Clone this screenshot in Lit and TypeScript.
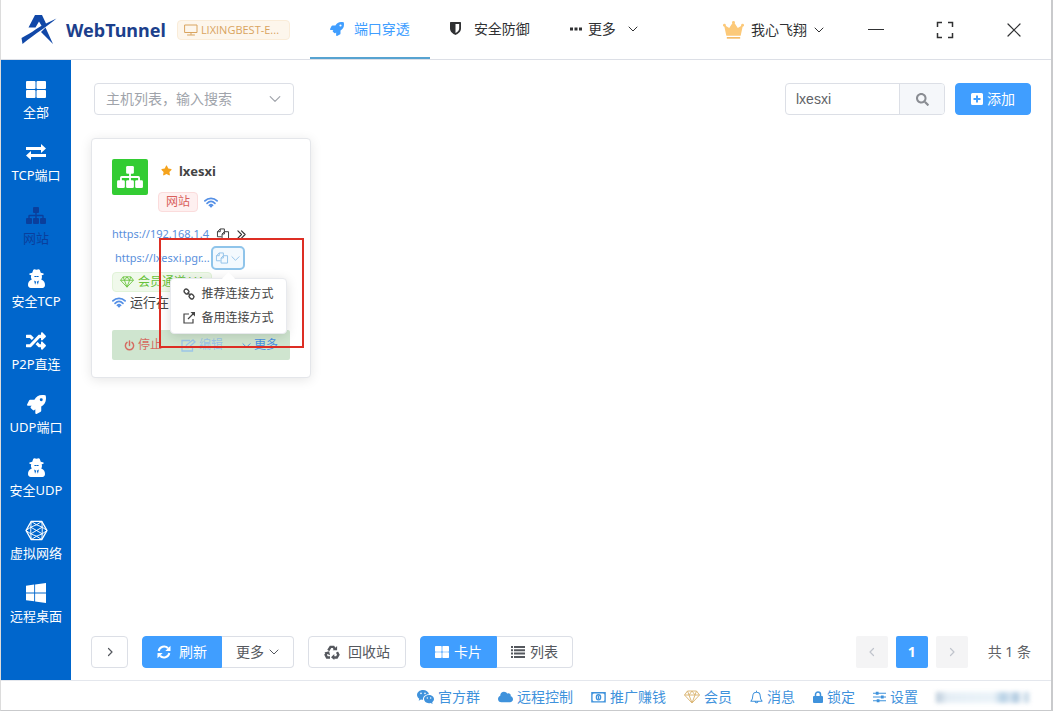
import { LitElement, html, css, svg, SVGTemplateResult } from "lit";
import { customElement, property, state } from "lit/decorators.js";
import { classMap } from "lit/directives/class-map.js";

interface Glyph {
  box: string;
  body: SVGTemplateResult;
}

const ROCKET =
  "M505.12 19.09c-1.19-5.53-6.66-11-12.2-12.18C460.7 0 435.5 0 410.4 0 307.2 0 245.3 55.2 199 128H94.8c-16.3 0-35.5 11.9-42.8 26.5L2.5 253.3A28.4 28.4 0 0 0 0 264a24 24 0 0 0 24 24h103.8l-22.5 22.5c-11.3 11.3-13 32.2 0 45.2l50.9 50.9c11.2 11.2 32.2 13.2 45.3 0l22.5-22.5V488a24 24 0 0 0 24 24 28.6 28.6 0 0 0 10.7-2.5l98.7-49.4c14.6-7.3 26.5-26.5 26.5-42.9V312.8c72.6-46.3 128-108.4 128-211.1.1-25.2.1-50.4-6.8-82.6zM384 168a40 40 0 1 1 40-40 40 40 0 0 1-40 40z";
const SHUFFLE =
  "M504.971 359.029c9.373 9.373 9.373 24.569 0 33.941l-80 79.984c-15.01 15.01-40.971 4.49-40.971-16.971V416h-58.785a12.004 12.004 0 0 1-8.773-3.812l-70.556-75.596 53.333-57.143L352 336h32v-39.981c0-21.438 25.943-31.998 40.971-16.971l80 79.981zM12 176h84l52.781 56.551 53.333-57.143-70.556-75.596A11.999 11.999 0 0 0 122.785 96H12c-6.627 0-12 5.373-12 12v56c0 6.627 5.373 12 12 12zm372 0v39.984c0 21.46 25.961 31.98 40.971 16.971l80-79.984c9.373-9.373 9.373-24.569 0-33.941l-80-79.981C409.943 24.021 384 34.582 384 56.019V96h-58.785a12.004 12.004 0 0 0-8.773 3.812L96 336H12c-6.627 0-12 5.373-12 12v56c0 6.627 5.373 12 12 12h110.785c3.326 0 6.503-1.381 8.773-3.812L352 176h32z";
const SEARCH =
  "M505 442.7L405.3 343c-4.5-4.5-10.6-7-17-7H372c27.6-35.3 44-79.7 44-128C416 93.1 322.9 0 208 0S0 93.1 0 208s93.1 208 208 208c48.3 0 92.7-16.4 128-44v16.3c0 6.4 2.5 12.5 7 17l99.7 99.7c9.4 9.4 24.6 9.4 33.9 0l28.3-28.3c9.4-9.4 9.4-24.6.1-34zM208 336c-70.7 0-128-57.2-128-128 0-70.7 57.2-128 128-128 70.7 0 128 57.2 128 128 0 70.7-57.2 128-128 128z";
const STAR =
  "M259.3 17.8L194 150.2 47.9 171.5c-26.2 3.8-36.7 36.1-17.7 54.6l105.7 103-25 145.5c-4.5 26.3 23.2 46 46.4 33.7L288 439.6l130.7 68.7c23.2 12.2 50.9-7.4 46.4-33.7l-25-145.5 105.7-103c19-18.5 8.5-50.8-17.7-54.6L382 150.2 316.7 17.8c-11.7-23.6-45.6-23.9-57.4 0z";
const CLOUD =
  "M537.6 226.6c4.1-10.7 6.4-22.4 6.4-34.6 0-53-43-96-96-96-19.7 0-38.1 6-53.3 16.2C367 64.2 315.3 32 256 32c-88.4 0-160 71.6-160 160 0 2.7.1 5.4.2 8.1C40.2 219.8 0 273.2 0 336c0 79.5 64.5 144 144 144h368c70.7 0 128-57.3 128-128 0-61.9-44-113.6-102.4-125.4z";
const WINDOWS =
  "M0 93.7l183.6-25.3v177.4H0V93.7zm0 324.6l183.6 25.3V268.4H0v149.9zm203.8 28L448 480V268.4H203.8v177.9zm0-380.6v180.1H448V32L203.8 65.7z";

const solid = (d: string) => svg`<path d=${d} fill="currentColor" />`;
const line = (d: string, w = 1) =>
  svg`<path d=${d} fill="none" stroke="currentColor" stroke-width=${w} stroke-linecap="round" stroke-linejoin="round" />`;

const GLYPHS: Record<string, Glyph> = {
  logo: {
    box: "0 0 36 30",
    body: svg`<path fill="#1148a8" d="M14 0h7l4 8.500L35.500 3.500C27 11 15 18 1.500 29L.5 23C6 20 10.500 17.500 14.500 14.500L20.500 10.800 18 6.500 14.500 12.500H7.500zM24.500 12.500 32 29 20 17z" />`,
  },
  monitor: { box: "0 0 14 12", body: line("M1 1h12v7.500H1zM7 8.500v2M3.500 11h7") },
  rocket: { box: "0 0 512 512", body: solid(ROCKET) },
  shield: {
    box: "0 0 12 14",
    body: svg`<path fill="currentColor" fill-rule="evenodd" d="M0 .7C0 .3.300 0 .700 0h10.600c.4 0 .7.300.700.700V7c0 4-4 6.300-6 7-2-.7-6-3-6-7zM6 2v10c2-1 4-2.500 4-5V2z" />`,
  },
  dots: { box: "0 0 12 4", body: solid("M0 .5h3v3H0zM4.500.5h3v3h-3zM9 .5h3v3H9z") },
  down: { box: "0 0 10 10", body: line("M1 3l4 4 4-4") },
  right: { box: "0 0 10 10", body: line("M3.500 1.500 7 5 3.500 8.500", 1.2) },
  left: { box: "0 0 10 10", body: line("M6.500 1.500 3 5l3.500 3.500", 1.2) },
  crown: {
    box: "0 0 22 20",
    body: svg`<path fill="#fcc979" d="M1 4.500 6.500 8 11 1l4.500 7L21 4.500 18.500 16h-15z" /><circle cx="1.500" cy="5" r="1.500" fill="#fcc979" /><circle cx="20.500" cy="5" r="1.500" fill="#fcc979" /><circle cx="11" cy="2" r="1.500" fill="#fcc979" /><path fill="#f3b04d" d="M4 17.500h14V19H4z" />`,
  },
  minus: { box: "0 0 16 16", body: svg`<path d="M0 7.500h16" stroke="currentColor" />` },
  expand: {
    box: "0 0 18 18",
    body: svg`<path d="M6 1.500H1.500V6M12 1.500h4.500V6M1.500 12v4.500H6M16.500 12v4.500H12" fill="none" stroke="currentColor" stroke-width="1.500" />`,
  },
  close: { box: "0 0 14 14", body: line("M1 1l12 12M13 1 1 13", 1.2) },
  grid: {
    box: "0 0 20 17",
    body: svg`<g fill="currentColor"><rect width="9.500" height="8" rx="1" /><rect x="10.500" width="9.500" height="8" rx="1" /><rect y="9" width="9.500" height="8" rx="1" /><rect x="10.500" y="9" width="9.500" height="8" rx="1" /></g>`,
  },
  swap: { box: "0 0 20 16", body: solid("M0 3h15V0l5 4.500L15 9V6H0zM20 10H5V7l-5 4.500L5 16v-3h15z") },
  sitemap: {
    box: "0 0 20 17",
    body: svg`<g fill="currentColor"><rect x="7" width="6" height="6" rx="1" /><rect y="11" width="6" height="6" rx="1" /><rect x="7" y="11" width="6" height="6" rx="1" /><rect x="14" y="11" width="6" height="6" rx="1" /></g><path d="M10 5v7M3 12V9q0-.5.5-.5h13q.5 0 .5.500v3" fill="none" stroke="currentColor" stroke-width="1.400" />`,
  },
  agent: {
    box: "0 0 18 20",
    body: svg`<path fill="currentColor" fill-rule="evenodd" d="M4.500 3.800 5.500 1C6 0 7.200 0 9 .8 10.800 0 12 0 12.500 1l1 2.800 3 .9v1.300l-2 .5c.6 2 .2 3.500-.5 4.500 3 1 4 3 4 6 0 2-1 3-2.700 3H3C1.300 20 0 19 0 17c0-3 1-5 4-6-.8-1.200-1.200-2.500-.6-4.500L1.500 6V4.700zM6.300 7.300C7 8.700 8 8.600 9 7.800c1 .8 2 .9 2.700-.5zM6.500 12l1 4.500L8.700 13.500zM11.500 12l-2.200 1.500 1.200 3z" />`,
  },
  shuffle: { box: "0 0 512 512", body: solid(SHUFFLE) },
  mesh: {
    box: "0 0 24 22",
    body: svg`<g fill="none" stroke="currentColor" stroke-linejoin="round"><path stroke-width="1.400" d="M6.500 1.500h11L23 11l-5.500 9.500h-11L1 11z" /><path d="M6.500 1.500 12 5l5.500-3.500L18 7.500 23 11l-5 3.500-.5 6L12 17l-5.500 3.500-.5-6L1 11l5-3.500zM12 5 6 7.500v7l6 2.500 6-2.500v-7zM6 7.500l12 7M18 7.500l-12 7" /></g>`,
  },
  windows: { box: "0 32 448 448", body: solid(WINDOWS) },
  search: { box: "0 0 512 512", body: solid(SEARCH) },
  plus: {
    box: "0 0 12 12",
    body: svg`<path fill="currentColor" fill-rule="evenodd" d="M1.500 0h9Q12 0 12 1.500v9q0 1.500-1.500 1.500h-9Q0 12 0 10.500v-9Q0 0 1.500 0zM5 2.500V5H2.500v2H5v2.500h2V7h2.500V5H7V2.500z" />`,
  },
  star: { box: "0 0 576 512", body: solid(STAR) },
  wifi: {
    box: "0 0 16 12",
    body: svg`<g fill="none" stroke="currentColor" stroke-width="2" stroke-linecap="round"><path d="M1 4.200c4-4 10-4 14 0M3.500 6.900c2.700-2.600 6.300-2.600 9 0" /><path d="M6.200 9.300q1.800-1.500 3.600 0" /></g><circle cx="8" cy="10.500" r="1.300" fill="currentColor" />`,
  },
  copy: {
    box: "0 0 13 12",
    body: svg`<g fill="none" stroke="currentColor" stroke-linejoin="round"><path d="M5 9H.5V3.500L3.500.5H8v3" /><path d="M.5 3.500h3v-3" /><path d="M5.500 6l2.500-2.500h4.500v8h-7z" /><path d="M5.500 6H8V3.500" /></g>`,
  },
  dbl: { box: "0 0 10 10", body: line("M1 1l4 4-4 4M5 1l4 4-4 4", 1.3) },
  diamond: {
    box: "0 0 16 14",
    body: svg`<path d="M3.500 1h9L15.500 5 8 13 .5 5zM.5 5h15M3.500 1 5 5l3 8 3-8 1.500-4M5 5l3-4 3 4" fill="none" stroke="currentColor" stroke-linejoin="round" />`,
  },
  link: {
    box: "0 0 12 12",
    body: svg`<g fill="none" stroke="currentColor" stroke-width="1.400"><rect x="1" y="1.500" width="5" height="4" rx="1.800" transform="rotate(45 3.500 3.500)" /><rect x="6" y="6.500" width="5" height="4" rx="1.800" transform="rotate(45 8.500 8.500)" /><path d="M4.500 4.500l3 3" /></g>`,
  },
  share: { box: "0 0 12 12", body: svg`<path d="M6 2H1v9h9V7M5 7l6-6" fill="none" stroke="currentColor" stroke-width="1.200" /><path d="M7.500 0H12v4.500z" fill="currentColor" />` },
  power: { box: "0 0 12 12", body: line("M6 1v5M3.300 2.600a4.500 4.500 0 1 0 5.400 0", 1.6) },
  edit: { box: "0 0 15 13", body: svg`<path d="M9 1.500H1v10.500h10.500V8M5 8.500l.5-2.500L12 .8 14 3 7.500 8.500z" fill="none" stroke="currentColor" stroke-width="1.300" />` },
  refresh: {
    box: "0 0 14 14",
    body: svg`<path d="M1.700 6a5.400 5.400 0 0 1 9.300-2.700M12.300 8a5.400 5.400 0 0 1-9.300 2.700" fill="none" stroke="currentColor" stroke-width="2" /><path d="M13.500.8V6H8.300zM.5 13.200V8h5.200z" fill="currentColor" />`,
  },
  recycle: {
    box: "0 0 16 15",
    body: svg`<path d="M4.300 5.500 6.500 1.900h3l1.500 2.400M13 7.200l1.400 2.500-1.600 2.800H9.500M6 12.500H3L1.600 9.800 3 7.500" fill="none" stroke="currentColor" stroke-width="2.400" /><path d="M8.700 5.300h4.400V1zM10.300 9v6L7 12.300zM.3 7.400l4.800-1.200 1 4z" fill="currentColor" />`,
  },
  list: { box: "0 0 14 12", body: solid("M0 0h2v2H0zM3 0h11v2H3zM0 3.300h2v2H0zM3 3.300h11v2H3zM0 6.600h2v2H0zM3 6.600h11v2H3zM0 10h2v2H0zM3 10h11v2H3z") },
  chat: {
    box: "0 0 17 14",
    body: svg`<path fill="currentColor" fill-rule="evenodd" d="M6 0c3 0 5.500 1.800 6 4.200-3.500 0-6.300 2.200-6 5.600-.7 0-1.400-.1-2-.3L1.700 10.800l.6-2C.9 7.900 0 6.500 0 5 0 2.200 2.700 0 6 0zM4 2.600a.8.8 0 1 0 0 1.600.8.8 0 0 0 0-1.600zm4 0a.8.8 0 1 0 0 1.600.8.8 0 0 0 0-1.600z" /><path fill="currentColor" fill-rule="evenodd" d="M12 5c2.800 0 5 1.800 5 4.100 0 1.300-.7 2.400-1.800 3.200l.4 1.600-1.900-1c-3.700 1-6.700-1-6.700-3.800C7 6.800 9.200 5 12 5zm-1.700 2.300a.7.7 0 1 0 0 1.400.7.7 0 0 0 0-1.400zm3.400 0a.7.7 0 1 0 0 1.400.7.7 0 0 0 0-1.400z" />`,
  },
  cloud: { box: "0 0 640 512", body: solid(CLOUD) },
  money: {
    box: "0 0 16 12",
    body: svg`<g fill="none" stroke="currentColor" stroke-width="1.500"><path d="M.8.800h14.400v10H.8z" /><ellipse cx="8" cy="5.800" rx="2.300" ry="2.800" /></g><path d="M7.400 4.200h1.200v3.400H7.400zM1 1h2L1 3zM15 1h-2l2 2zM1 10.600h2l-2-2zM15 10.600h-2l2-2z" fill="currentColor" />`,
  },
  bell: { box: "0 0 14 15", body: line("M1 12c2-2 2-3 2-5.500C3 4 4.500 2.300 7 2.300S11 4 11 6.500C11 9 11 10 13 12zM7 2.300V1M5.500 12.500q1.500 2.500 3 0", 1.1) },
  lock: {
    box: "0 0 10 12",
    body: svg`<path d="M2.500 6V3.500a2.500 2.500 0 0 1 5 0V6" fill="none" stroke="currentColor" stroke-width="1.500" /><rect y="5" width="10" height="7" rx="1" fill="currentColor" />`,
  },
  sliders: {
    box: "0 0 14 12",
    body: svg`<path d="M0 2h14M0 6h14M0 10h14" stroke="currentColor" stroke-width="1.200" /><path d="M3 .3h3v3.400H3zM8.500 4.300h3v3.400h-3zM4 8.300h3v3.400H4z" fill="currentColor" />`,
  },
};

@customElement("ui-icon")
class UiIcon extends LitElement {
  @property() name = "";
  @property({ type: Number }) w = 14;
  @property({ type: Number }) h = 14;

  static styles = css`
    :host {
      display: inline-flex;
      flex: none;
    }
    svg {
      display: block;
      overflow: visible;
    }
  `;

  render() {
    const g = GLYPHS[this.name];
    return html`<svg width=${this.w} height=${this.h} viewBox=${g.box} aria-hidden="true">${g.body}</svg>`;
  }
}

const icon = (name: string, w: number, h: number) =>
  html`<ui-icon name=${name} w=${w} h=${h}></ui-icon>`;

const base = css`
  * {
    box-sizing: border-box;
  }
  button,
  input,
  select {
    font: inherit;
    color: inherit;
    margin: 0;
    padding: 0;
    border: 0;
    background: none;
    outline: none;
    border-radius: 0;
  }
  button {
    display: inline-flex;
    align-items: center;
    justify-content: center;
    white-space: nowrap;
    cursor: pointer;
  }
  a {
    color: inherit;
    text-decoration: none;
    white-space: nowrap;
  }
`;

@customElement("tunnel-card")
class TunnelCard extends LitElement {
  @state() private menuOpen = true;

  static styles = [
    base,
    css`
      :host {
        display: block;
        position: relative;
        box-sizing: border-box;
        width: 220px;
        padding: 20px 20px 17px;
        background: #fff;
        border: 1px solid #e4e6ea;
        border-radius: 4px;
        box-shadow: 0 2px 12px rgba(0, 0, 0, 0.1);
        font-size: 12px;
        line-height: 20px;
      }
      .head {
        display: flex;
        gap: 10px;
      }
      .avatar {
        display: flex;
        flex: none;
        align-items: center;
        justify-content: center;
        width: 36px;
        height: 36px;
        border-radius: 2px;
        background: #33cc33;
        color: #fff;
      }
      .title {
        display: flex;
        align-items: center;
        gap: 7px;
        height: 23px;
        padding-left: 3px;
        color: #f5a31c;
      }
      .name {
        margin: 0;
        font-size: 13px;
        line-height: 20px;
        color: #444;
      }
      .tags {
        display: flex;
        align-items: center;
        gap: 6px;
        margin-top: 10px;
        color: #5590e6;
      }
      .tag {
        display: flex;
        align-items: center;
        height: 20px;
        padding: 0 7px;
        border: 1px solid #fbdcdc;
        border-radius: 4px;
        background: #fef0f0;
        color: #d9605c;
        line-height: 18px;
      }
      .tag.vip {
        gap: 4px;
        width: 100px;
        margin-top: 2px;
        border-color: #e1f3d8;
        background: #f0f9eb;
        color: #67c23a;
        white-space: nowrap;
      }
      .row {
        display: flex;
        align-items: center;
        height: 24px;
        color: #333;
      }
      .row.first {
        margin-top: 10px;
        gap: 8px;
      }
      .row.second {
        gap: 1px;
        padding-left: 3px;
      }
      .url {
        font-size: 11px;
        color: #5a8fdc;
      }
      .drop {
        position: relative;
        display: flex;
      }
      .toggle {
        gap: 3px;
        width: 34px;
        height: 24px;
        border: 2px solid #8fc4ea;
        border-radius: 5px;
        background: #f3f9fe;
        color: #8fc0e8;
      }
      .menu {
        position: absolute;
        z-index: 2;
        top: 32px;
        right: -42px;
        width: 117px;
        margin: 0;
        padding: 3px 0;
        list-style: none;
        background: #fff;
        border: 1px solid #e8eaee;
        border-radius: 4px;
        box-shadow: 0 2px 12px rgba(0, 0, 0, 0.14);
      }
      .menu::before {
        content: "";
        position: absolute;
        top: -5px;
        left: 53px;
        width: 9px;
        height: 9px;
        background: #fff;
        transform: rotate(45deg);
      }
      .menu li {
        display: flex;
      }
      .option {
        gap: 7px;
        width: 100%;
        height: 24px;
        color: #444;
      }
      .status {
        display: flex;
        align-items: center;
        gap: 4px;
        height: 20px;
        color: #5590e6;
      }
      .state {
        font-size: 13px;
        color: #444;
      }
      .actions {
        display: flex;
        justify-content: space-between;
        align-items: center;
        height: 30px;
        margin-top: 18px;
        padding: 0 12px;
        border-radius: 2px;
        background: #cfe5cf;
      }
      .action {
        gap: 3px;
        color: #4a90e2;
      }
      .action.stop {
        color: #d56a60;
      }
      .action.off {
        color: #9cc5e8;
      }
      .frame {
        position: absolute;
        z-index: 3;
        top: 99px;
        left: 67px;
        width: 145px;
        height: 110px;
        border: 2px solid #dd2e24;
        pointer-events: none;
      }
    `,
  ];

  render() {
    return html`
      <div class="head">
        <span class="avatar">${icon("sitemap", 26, 22)}</span>
        <div>
          <div class="title">${icon("star", 11, 11)}<h2 class="name">lxesxi</h2></div>
          <div class="tags"><span class="tag">网站</span>${icon("wifi", 14, 11)}</div>
        </div>
      </div>
      <div class="row first">
        <a class="url" href="#local">https://192.168.1.4</a>${icon("copy", 12, 12)}${icon("dbl", 9, 9)}
      </div>
      <div class="row second">
        <a class="url" href="#remote">https://lxesxi.pgr...</a>
        <div class="drop">
          <button class="toggle" aria-label="复制连接" @click=${() => (this.menuOpen = !this.menuOpen)}>
            ${icon("copy", 12, 12)}${icon("down", 9, 9)}
          </button>
          ${this.menuOpen
            ? html`<ul class="menu">
                <li><button class="option">${icon("link", 12, 12)}推荐连接方式</button></li>
                <li><button class="option">${icon("share", 12, 12)}备用连接方式</button></li>
              </ul>`
            : null}
        </div>
      </div>
      <div class="tag vip">${icon("diamond", 14, 12)}会员通道 V4</div>
      <div class="status">${icon("wifi", 14, 11)}<span class="state">运行在</span></div>
      <div class="actions">
        <button class="action stop">${icon("power", 11, 11)}停止</button>
        <button class="action off" disabled>${icon("edit", 15, 13)}编辑</button>
        <button class="action">${icon("down", 9, 9)}更多</button>
      </div>
      <div class="frame"></div>
    `;
  }
}

const NAV: [string, string, number, number][] = [
  ["全部", "grid", 20, 17],
  ["TCP端口", "swap", 20, 16],
  ["网站", "sitemap", 20, 17],
  ["安全TCP", "agent", 17, 19],
  ["P2P直连", "shuffle", 20, 20],
  ["UDP端口", "rocket", 19, 19],
  ["安全UDP", "agent", 17, 19],
  ["虚拟网络", "mesh", 23, 21],
  ["远程桌面", "windows", 20, 20],
];

const LINKS: [string, string, number, number][] = [
  ["官方群", "chat", 17, 14],
  ["远程控制", "cloud", 15, 12],
  ["推广赚钱", "money", 15, 11],
  ["会员", "diamond", 16, 14],
  ["消息", "bell", 13, 14],
  ["锁定", "lock", 10, 12],
  ["设置", "sliders", 13, 12],
];

@customElement("app-root")
class AppRoot extends LitElement {
  @state() private nav = 2;

  static styles = [
    base,
    css`
      :host {
        display: grid;
        grid-template-rows: 60px minmax(0, 1fr) 30px;
        box-sizing: border-box;
        height: 100vh;
        border: solid #c9cacc;
        border-width: 0 2px 1px 1px;
        border-left-color: #dcdcdc;
        background: #fff;
        color: #303133;
        font-family: "Noto Sans", "Noto Sans CJK SC", sans-serif;
        font-size: 14px;
        line-height: 20px;
      }
      .top {
        display: flex;
        align-items: center;
        border-bottom: 1px solid #dcdfe6;
        padding: 0 28px 0 20px;
      }
      .brand {
        margin: 0 11px 0 9px;
        font-size: 18px;
        line-height: 28px;
        color: #1c3f8c;
      }
      .host {
        display: flex;
        align-items: center;
        gap: 3px;
        width: 113px;
        height: 20px;
        padding: 0 6px;
        border: 1px solid #faecd8;
        border-radius: 4px;
        background: #fdf6ec;
        color: #d9a45f;
        line-height: 18px;
      }
      .host span {
        font-family: "Open Sans", sans-serif;
        overflow: hidden;
        white-space: nowrap;
        font-size: 11px;
      }
      .tabs {
        display: flex;
        align-self: stretch;
        margin-left: 20px;
      }
      .tab {
        height: 59px;
        padding: 0 20px;
        border-bottom: 2px solid transparent;
      }
      .tab.on {
        color: #409eff;
        border-bottom-color: #57a3d1;
      }
      .tab .lead {
        display: flex;
        width: 24px;
      }
      .tab.more {
        gap: 6px;
      }
      .tab.more .caret {
        margin-left: 6px;
      }
      .caret {
        display: flex;
      }
      .user {
        gap: 7px;
        margin-left: auto;
        margin-right: 43px;
      }
      .win {
        width: 18px;
        height: 30px;
      }
      .wins {
        display: flex;
        gap: 51px;
      }
      .middle {
        display: grid;
        grid-template-columns: 70px minmax(0, 1fr);
      }
      .side {
        display: flex;
        flex-direction: column;
        padding-top: 16px;
        background: #0066cc;
        color: #fff;
      }
      .item {
        flex-direction: column;
        justify-content: flex-start;
        height: 63px;
        font-size: 13px;
        line-height: 20px;
      }
      .item.on {
        color: #0a3f9c;
      }
      .pic {
        display: flex;
        align-items: center;
        justify-content: center;
        height: 26px;
      }
      .main {
        display: flex;
        flex-direction: column;
        padding: 23px 20px 12px;
      }
      .tools {
        display: flex;
        align-items: center;
        padding-left: 3px;
      }
      .pick {
        display: grid;
        align-items: center;
        width: 200px;
        height: 32px;
        border: 1px solid #dcdfe6;
        border-radius: 4px;
        color: #a0a4ab;
      }
      .pick select,
      .pick .caret {
        grid-area: 1 / 1;
      }
      .pick select {
        appearance: none;
        height: 30px;
        padding: 0 11px;
      }
      .pick .caret {
        justify-self: end;
        margin-right: 12px;
        pointer-events: none;
      }
      .find {
        display: flex;
        width: 160px;
        height: 32px;
        margin-left: auto;
        border: 1px solid #dcdfe6;
        border-radius: 4px;
        overflow: hidden;
      }
      .find input {
        flex: 1;
        min-width: 0;
        padding: 0 10px;
        color: #606266;
        font-family: "Liberation Sans", sans-serif;
      }
      .find button {
        width: 45px;
        border-left: 1px solid #dcdfe6;
        background: #f5f7fa;
        color: #8a8d93;
      }
      .btn {
        gap: 8px;
        height: 32px;
        padding: 0 15px;
        border: 1px solid #dcdfe6;
        border-radius: 4px;
        background: #fff;
        color: #55585e;
      }
      .btn.blue {
        border-color: #409eff;
        background: #409eff;
        color: #fff;
      }
      .btn.add {
        gap: 4px;
        margin-left: 10px;
      }
      .cards {
        flex: 1;
        padding-top: 23px;
      }
      .bar {
        display: flex;
        align-items: center;
        gap: 14px;
      }
      .join {
        display: flex;
      }
      .join .btn {
        padding: 0 14px;
      }
      .join .btn:first-child {
        border-radius: 4px 0 0 4px;
      }
      .join .btn:last-child {
        border-left: 0;
        border-radius: 0 4px 4px 0;
      }
      .btn.tight {
        gap: 5px;
      }
      .btn.small {
        width: 37px;
        padding: 0;
      }
      .pages {
        display: flex;
        align-items: center;
        gap: 8px;
        margin-left: auto;
        color: #606266;
      }
      .page {
        width: 32px;
        height: 32px;
        border-radius: 2px;
        background: #f4f4f5;
        color: #c0c4cc;
      }
      .page.on {
        background: #409eff;
        color: #fff;
        font-weight: 700;
      }
      .total {
        margin-left: 12px;
      }
      .foot {
        display: flex;
        align-items: center;
        justify-content: flex-end;
        gap: 18px;
        padding: 3px 22px 0 20px;
        border-top: 1px solid #e4e7ed;
        color: #3f92dc;
      }
      .foot a {
        display: flex;
        align-items: center;
        gap: 4px;
      }
      .gem {
        display: flex;
        color: #dcb878;
      }
      .smudge {
        width: 93px;
        height: 11px;
        background: linear-gradient(
          90deg,
          #a9bdd0,
          #dfeaf3 12%,
          #e3eef6 35%,
          #e6f0f7 62%,
          #a3c4de 72%,
          #cfe0ee 80%,
          #93b6d4 86%,
          #edf3f8 92%,
          #a9c4da
        );
        filter: blur(2px);
        opacity: 0.8;
      }
    `,
  ];

  render() {
    return html`
      <header class="top">
        ${icon("logo", 36, 30)}
        <h1 class="brand">WebTunnel</h1>
        <div class="host">${icon("monitor", 14, 12)}<span>LIXINGBEST-E...</span></div>
        <nav class="tabs">
          <button class="tab on"><span class="lead">${icon("rocket", 14, 14)}</span>端口穿透</button>
          <button class="tab"><span class="lead">${icon("shield", 11, 13)}</span>安全防御</button>
          <button class="tab more">
            ${icon("dots", 12, 4)}更多<span class="caret">${icon("down", 10, 10)}</span>
          </button>
        </nav>
        <button class="user">${icon("crown", 21, 20)}我心飞翔${icon("down", 10, 10)}</button>
        <div class="wins">
          <button class="win" aria-label="最小化">${icon("minus", 16, 16)}</button>
          <button class="win" aria-label="全屏">${icon("expand", 18, 18)}</button>
          <button class="win" aria-label="关闭">${icon("close", 14, 14)}</button>
        </div>
      </header>

      <div class="middle">
        <nav class="side">
          ${NAV.map(
            ([label, name, w, h], i) => html`<button
              class=${classMap({ item: true, on: i === this.nav })}
              @click=${() => (this.nav = i)}
            >
              <span class="pic">${icon(name, w, h)}</span>${label}
            </button>`,
          )}
        </nav>

        <main class="main">
          <div class="tools">
            <div class="pick">
              <select aria-label="主机列表">
                <option>主机列表，输入搜索</option>
              </select>
              <span class="caret">${icon("down", 12, 12)}</span>
            </div>
            <div class="find">
              <input type="text" aria-label="搜索" .value=${"lxesxi"} />
              <button aria-label="搜索">${icon("search", 13, 13)}</button>
            </div>
            <button class="btn blue add">${icon("plus", 12, 12)}添加</button>
          </div>

          <section class="cards"><tunnel-card></tunnel-card></section>

          <div class="bar">
            <button class="btn small" aria-label="展开">${icon("right", 10, 10)}</button>
            <div class="join">
              <button class="btn blue">${icon("refresh", 14, 14)}刷新</button>
              <button class="btn tight">更多${icon("down", 10, 10)}</button>
            </div>
            <button class="btn">${icon("recycle", 16, 15)}回收站</button>
            <div class="join">
              <button class="btn blue tight">${icon("grid", 14, 12)}卡片</button>
              <button class="btn tight">${icon("list", 14, 12)}列表</button>
            </div>
            <div class="pages">
              <button class="page" aria-label="上一页" disabled>${icon("left", 10, 10)}</button>
              <button class="page on">1</button>
              <button class="page" aria-label="下一页" disabled>${icon("right", 10, 10)}</button>
              <span class="total">共 1 条</span>
            </div>
          </div>
        </main>
      </div>

      <footer class="foot">
        ${LINKS.map(
          ([label, name, w, h]) => html`<a href="#${name}"
            >${name === "diamond" ? html`<span class="gem">${icon(name, w, h)}</span>` : icon(name, w, h)}${label}</a
          >`,
        )}
        <span class="smudge"></span>
      </footer>
    `;
  }
}
